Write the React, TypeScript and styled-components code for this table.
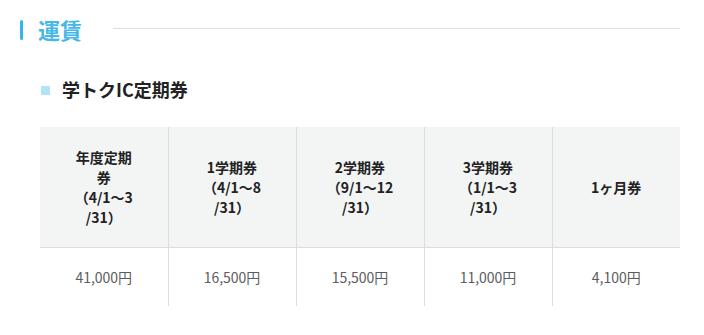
import React from "react";
import styled, { createGlobalStyle } from "styled-components";

const Global = createGlobalStyle`
  html, body { margin: 0; padding: 0; background: #fff; }
  body { font-family: "Noto Sans CJK JP", "Noto Sans", sans-serif; color: #222; }
`;

const Page = styled.div`
  padding: 18px 24px 0 20px;
`;

const Heading = styled.div`
  display: flex;
  align-items: center;
  height: 22px;
`;

const HeadingBar = styled.span`
  width: 3px;
  height: 20px;
  background: #35b6ea;
  border-radius: 2px;
  margin-top: 2px;
`;

const HeadingText = styled.h2`
  margin: 0 0 0 15px;
  font-size: 22px;
  line-height: 22px;
  font-weight: 700;
  color: #45b8e8;
`;

const HeadingRule = styled.span`
  flex: 1;
  height: 1px;
  background: #dddddd;
  margin-left: 31px;
  margin-top: -2px;
`;

const Section = styled.div`
  padding-left: 20px;
  margin-top: 37px;
`;

const SubHeading = styled.h3`
  display: flex;
  align-items: center;
  margin: 0;
  font-size: 18px;
  line-height: 24px;
  font-weight: 700;
  color: #222;
  &::before {
    content: "";
    width: 9px;
    height: 9px;
    background: #b3e3f6;
    margin: 2px 12px 0 1px;
  }
`;

const Table = styled.table`
  margin-top: 26px;
  width: 640px;
  border-collapse: collapse;
  table-layout: fixed;
`;

const Th = styled.th`
  background: #f3f5f5;
  padding: 20px 0;
  font-size: 14px;
  line-height: 20px;
  font-weight: 700;
  color: #222;
  text-align: center;
  vertical-align: middle;
  border-bottom: 1px solid #dddddd;
  border-right: 1px solid #dddddd;
  &:last-child { border-right: none; }
`;

const Td = styled.td`
  padding: 19px 0;
  font-size: 14px;
  line-height: 20px;
  color: #5c5c5c;
  text-align: center;
  border-right: 1px solid #dddddd;
  &:last-child { border-right: none; }
`;

const headers: React.ReactNode[] = [
  <>年度定期<br />券<br />（4/1〜3<br />/31）</>,
  <>1学期券<br />（4/1〜8<br />/31）</>,
  <>2学期券<br />（9/1〜12<br />/31）</>,
  <>3学期券<br />（1/1〜3<br />/31）</>,
  <>1ヶ月券</>,
];

const prices = ["41,000円", "16,500円", "15,500円", "11,000円", "4,100円"];

export default function App() {
  return (
    <Page>
      <Global />
      <Heading>
        <HeadingBar />
        <HeadingText>運賃</HeadingText>
        <HeadingRule />
      </Heading>
      <Section>
        <SubHeading>学トクIC定期券</SubHeading>
        <Table>
          <thead>
            <tr>
              {headers.map((h, i) => (
                <Th key={i}>{h}</Th>
              ))}
            </tr>
          </thead>
          <tbody>
            <tr>
              {prices.map((p) => (
                <Td key={p}>{p}</Td>
              ))}
            </tr>
          </tbody>
        </Table>
      </Section>
    </Page>
  );
}
